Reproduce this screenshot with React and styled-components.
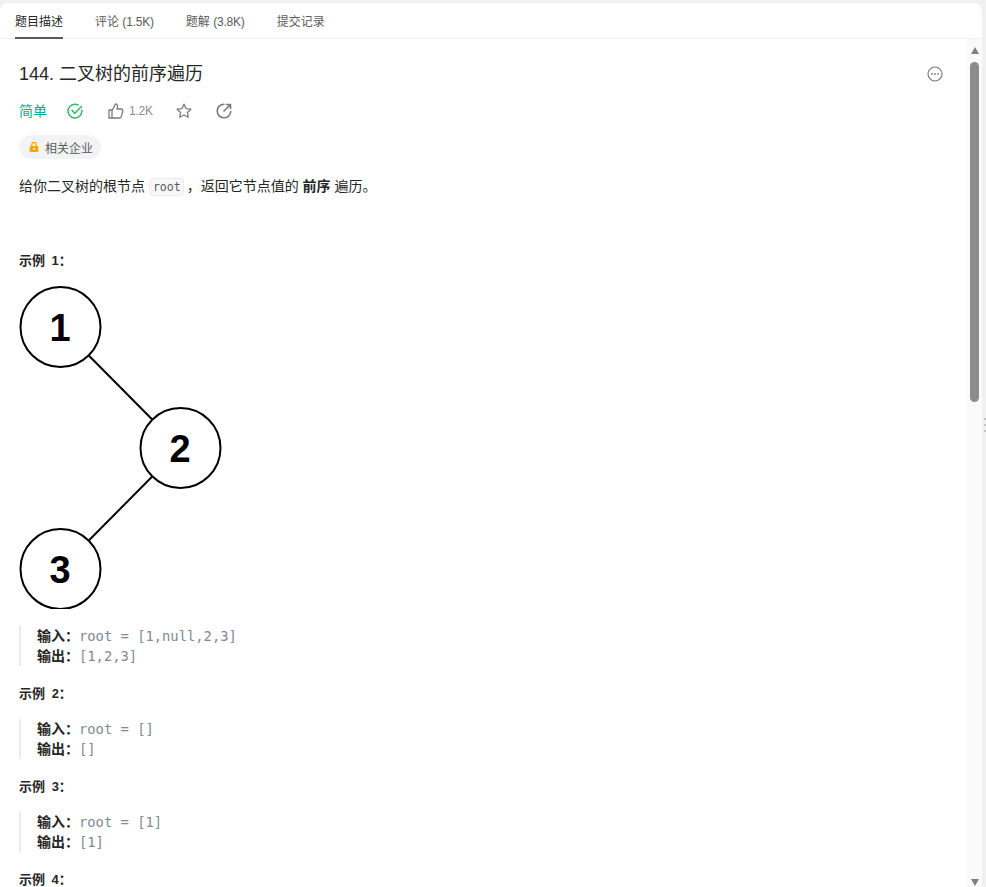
import React from "react";
import styled, { createGlobalStyle } from "styled-components";

const GlobalStyle = createGlobalStyle`
  html, body {
    margin: 0;
    height: 100%;
    background: #f0f0f0;
    overflow: hidden;
  }
  #root {
    height: 100%;
  }
`;

const SANS = `"Liberation Sans", "Noto Sans CJK SC", sans-serif`;
const MONO = `"DejaVu Sans Mono", "Liberation Mono", monospace`;

const Page = styled.div`
  height: 887px;
  box-sizing: border-box;
  padding: 3px 4px 0 0;
  display: flex;
  font-family: ${SANS};
  position: relative;
`;

const Card = styled.div`
  flex: 1;
  min-width: 0;
  background: #fff;
  border-radius: 8px 8px 0 0;
  display: flex;
  flex-direction: column;
  overflow: hidden;
`;

const Tabs = styled.div`
  height: 36px;
  flex: none;
  box-sizing: border-box;
  border-bottom: 1px solid #f0f0f0;
  display: flex;
  gap: 32px;
  padding-left: 15px;
`;

const Tab = styled.div`
  height: 36px;
  box-sizing: border-box;
  padding-top: 11px;
  font-size: 12px;
  line-height: 16px;
  color: ${(p) => (p.$active ? "#262626" : "#5c5c5c")};
  border-bottom: ${(p) => (p.$active ? "2px solid #595959" : "none")};
`;

const TabCount = styled.span`
  letter-spacing: -0.2px;
`;

const Body = styled.div`
  flex: 1;
  min-height: 0;
  display: flex;
`;

const Content = styled.div`
  flex: 1;
  min-width: 0;
  box-sizing: border-box;
  padding: 24px 0 0 19px;
  overflow: hidden;
`;

const TitleRow = styled.div`
  display: flex;
  justify-content: space-between;
  align-items: center;
  height: 22px;
  padding-right: 24px;
`;

const Title = styled.h1`
  margin: 0;
  font-size: 18px;
  line-height: 22px;
  font-weight: 400;
  color: #262626;
`;

const MetaRow = styled.div`
  display: flex;
  align-items: center;
  height: 20px;
  margin-top: 16px;
`;

const Difficulty = styled.span`
  font-size: 14px;
  line-height: 20px;
  color: #00af9b;
  width: 48px;
`;

const MetaIcon = styled.svg`
  width: ${(p) => p.$size || 18}px;
  height: ${(p) => p.$size || 18}px;
  flex: none;
  display: block;
`;

const LikeCount = styled.span`
  font-size: 12px;
  letter-spacing: -0.2px;
  color: #8c8c8c;
  margin-left: 5px;
  width: 38px;
`;

const Spacer = styled.span`
  width: ${(p) => p.$w}px;
  flex: none;
`;

const Badge = styled.div`
  display: inline-flex;
  align-items: center;
  gap: 5px;
  height: 24px;
  box-sizing: border-box;
  margin-top: 14px;
  padding: 0 8px 0 9px;
  border-radius: 12px;
  background: #f2f3f4;
  font-size: 12px;
  color: #5c5c5c;
`;

const Paragraph = styled.p`
  margin: 16px 0 0;
  font-size: 14px;
  line-height: 22px;
  color: #262626;
`;

const InlineCode = styled.code`
  font-family: ${MONO};
  font-size: 11.6px;
  color: #5c5c5c;
  background: #f7f7f8;
  border: 1px solid #ececec;
  border-radius: 4px;
  padding: 1px 2px 1px 3px;
  margin-right: -1px;
`;

const Heading = styled.div`
  font-size: 13px;
  font-weight: 700;
  line-height: 20px;
  word-spacing: 3px;
  color: #262626;
  margin-top: ${(p) => p.$top}px;
`;

const Tree = styled.svg`
  display: block;
  width: 205px;
  height: 326px;
  margin-top: 12px;
`;

const Example = styled.div`
  margin-top: ${(p) => p.$top}px;
  border-left: 2px solid #ebebeb;
  padding-left: 16px;
  width: 400px;
`;

const ExampleLine = styled.div`
  font-size: 13.8px;
  line-height: 20px;
  height: 20px;
  white-space: pre;
  font-family: ${MONO};
  color: #7f8a93;
`;

const Label = styled.b`
  display: inline-block;
  width: 42px;
  font-family: ${SANS};
  font-size: 14px;
  font-weight: 700;
  color: #262626;
`;

const Scrollbar = styled.div`
  width: 15px;
  flex: none;
  background: #fafafa;
  box-sizing: border-box;
  display: flex;
  flex-direction: column;
  align-items: center;
  padding-top: 8px;
`;

const Arrow = styled.div`
  width: 0;
  height: 0;
  flex: none;
  border-left: 4.5px solid transparent;
  border-right: 4.5px solid transparent;
  ${(p) => (p.$down ? "border-top" : "border-bottom")}: 7px solid #7f7f7f;
`;

const Thumb = styled.div`
  width: 9px;
  height: 340px;
  flex: none;
  margin-top: 8px;
  background: #8c8c8c;
  border-radius: 5px;
`;

const Track = styled.div`
  flex: 1;
`;

const ArrowBottom = styled.div`
  height: 7px;
  margin-bottom: 1px;
`;

const GripDots = styled.div`
  position: absolute;
  right: 0;
  top: 418px;
  width: 2px;
  display: flex;
  flex-direction: column;
  gap: 4px;
`;

const GripDot = styled.span`
  height: 2px;
  background: #c4c4c4;
`;

const TreeNode = ({ x, y, label }) => (
  <>
    <circle cx={x} cy={y} r="40" fill="#fff" stroke="#000" strokeWidth="2" />
    <text
      x={x - 0.5}
      y={y + 13.5}
      textAnchor="middle"
      fontFamily='"Liberation Sans", sans-serif'
      fontWeight="700"
      fontSize="38"
      fill="#000"
    >
      {label}
    </text>
  </>
);

const examples = [
  { top: 17, input: "root = [1,null,2,3]", output: "[1,2,3]" },
  { top: 15, input: "root = []", output: "[]" },
  { top: 15, input: "root = [1]", output: "[1]" },
];

export default function App() {
  return (
    <>
      <GlobalStyle />
      <Page>
        <Card>
          <Tabs>
            <Tab $active>题目描述</Tab>
            <Tab>评论 <TabCount>(1.5K)</TabCount></Tab>
            <Tab>题解 <TabCount>(3.8K)</TabCount></Tab>
            <Tab>提交记录</Tab>
          </Tabs>
          <Body>
            <Content>
              <TitleRow>
                <Title>144. 二叉树的前序遍历</Title>
                <MetaIcon viewBox="0 0 16 16" $size={16} fill="none" stroke="#7a7a7a" strokeWidth="1.2">
                  <circle cx="8" cy="8" r="7" />
                  <circle cx="5" cy="8" r="0.9" fill="#7a7a7a" stroke="none" />
                  <circle cx="8" cy="8" r="0.9" fill="#7a7a7a" stroke="none" />
                  <circle cx="11" cy="8" r="0.9" fill="#7a7a7a" stroke="none" />
                </MetaIcon>
              </TitleRow>
              <MetaRow>
                <Difficulty>简单</Difficulty>
                <MetaIcon viewBox="0 0 16 16" $size={16} fill="none" stroke="#2cbb5d" strokeWidth="1.5" strokeLinecap="round" strokeLinejoin="round">
                  <path d="M14.800 7.200A6.900 6.900 0 1 1 11 1.900" />
                  <path d="M5 7.400l2.800 2.800L14.500 3.500" />
                </MetaIcon>
                <Spacer $w={25} />
                <MetaIcon viewBox="0 0 16 16" $size={16} fill="none" stroke="#7a7a7a" strokeWidth="1.300" strokeLinejoin="round">
                  <path d="M1 7h3v8H1z" />
                  <path d="M4 7.500L7.500 1c1.400 0 2.200 1 2 2.200L9 6h4.400c1 0 1.700 1 1.400 2l-1.500 5.600c-.2.800-.9 1.400-1.700 1.400H4" />
                </MetaIcon>
                <LikeCount>1.2K</LikeCount>
                <Spacer $w={9} />
                <MetaIcon viewBox="0 0 16 16" $size={16} fill="none" stroke="#7a7a7a" strokeWidth="1.300" strokeLinejoin="round">
                  <path d="M8 1.200l2.100 4.400 4.800.6-3.500 3.300.9 4.800L8 12l-4.300 2.300.9-4.800L1.100 6.200l4.800-.6z" />
                </MetaIcon>
                <Spacer $w={24} />
                <MetaIcon viewBox="0 0 16 16" $size={16} fill="none" stroke="#7a7a7a" strokeWidth="1.600" strokeLinecap="round" strokeLinejoin="round">
                  <path d="M14.800 8.500A6.800 6.800 0 1 1 8 1.200" />
                  <path d="M8 8l6-6M10.500 1.500h4v4" />
                </MetaIcon>
              </MetaRow>
              <Badge>
                <MetaIcon viewBox="0 0 12 12" $size={12}>
                  <path d="M2.500 5h7a.8.8 0 0 1 .8.800v4.400a.8.8 0 0 1-.8.800h-7a.8.8 0 0 1-.8-.8V5.800a.8.8 0 0 1 .8-.8z" fill="#ffa116" />
                  <path d="M3.800 5V3.500a2.200 2.200 0 0 1 4.400 0V5" fill="none" stroke="#ffa116" strokeWidth="1.200" />
                  <circle cx="6" cy="8" r="1" fill="#fff" />
                </MetaIcon>
                相关企业
              </Badge>
              <Paragraph>
                给你二叉树的根节点 <InlineCode>root</InlineCode> ，返回它节点值的 <b>前序</b> 遍历。
              </Paragraph>
              <Heading $top={53}>示例 1：</Heading>
              <Tree viewBox="0 0 205 326">
                <line x1="41.5" y1="44" x2="161.500" y2="165" stroke="#000" strokeWidth="2" />
                <line x1="161.500" y1="165" x2="41.500" y2="286" stroke="#000" strokeWidth="2" />
                <TreeNode x={41.5} y={44} label="1" />
                <TreeNode x={161.5} y={165} label="2" />
                <TreeNode x={41.5} y={286} label="3" />
              </Tree>
              {examples.map((ex, i) => (
                <React.Fragment key={i}>
                  {i > 0 && <Heading $top={18}>示例 {i + 1}：</Heading>}
                  <Example $top={ex.top}>
                    <ExampleLine><Label>输入：</Label>{ex.input}</ExampleLine>
                    <ExampleLine><Label>输出：</Label>{ex.output}</ExampleLine>
                  </Example>
                </React.Fragment>
              ))}
              <Heading $top={18}>示例 4：</Heading>
            </Content>
            <Scrollbar>
              <Arrow />
              <Thumb />
              <Track />
              <ArrowBottom><Arrow $down /></ArrowBottom>
            </Scrollbar>
          </Body>
        </Card>
        <GripDots>
          <GripDot />
          <GripDot />
          <GripDot />
        </GripDots>
      </Page>
    </>
  );
}
